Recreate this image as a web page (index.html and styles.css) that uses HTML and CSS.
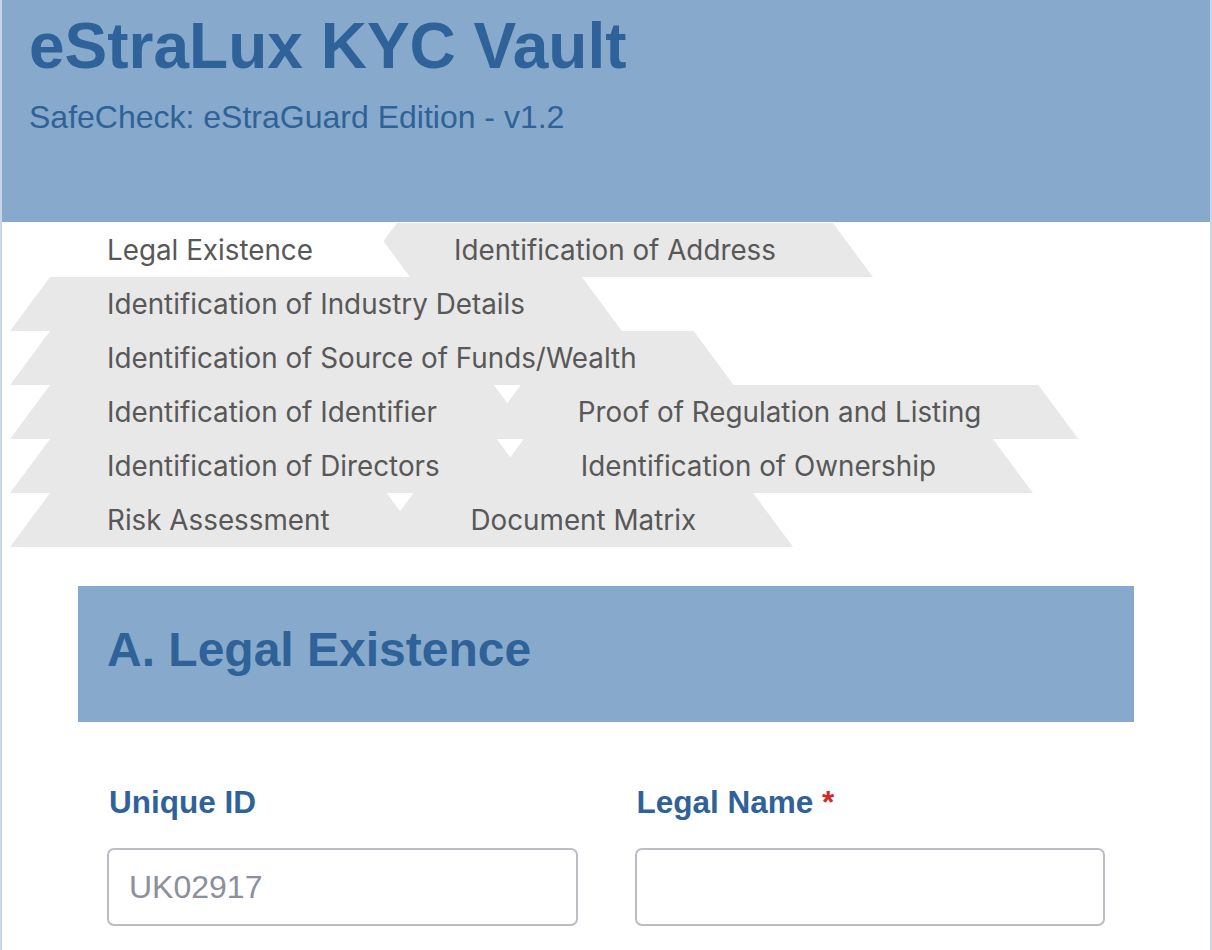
FILE: index.html
```html
<!DOCTYPE html>
<html lang="en">
<head>
<meta charset="utf-8">
<title>eStraLux KYC Vault</title>
<link rel="stylesheet" href="styles.css">
</head>
<body>
<div class="page">
  <header class="masthead">
    <h1 class="title">eStraLux KYC Vault</h1>
    <p class="subtitle">SafeCheck: eStraGuard Edition - v1.2</p>
  </header>
  <nav class="tabs">
    <a class="tab active">Legal Existence</a>
    <a class="tab">Identification of Address</a>
    <a class="tab">Identification of Industry Details</a>
    <a class="tab">Identification of Source of Funds/Wealth</a>
    <a class="tab">Identification of Identifier</a>
    <a class="tab">Proof of Regulation and Listing</a>
    <a class="tab">Identification of Directors</a>
    <a class="tab">Identification of Ownership</a>
    <a class="tab">Risk Assessment</a>
    <a class="tab">Document Matrix</a>
  </nav>
  <section class="section">
    <div class="section-head">
      <h2 class="section-title">A. Legal Existence</h2>
    </div>
    <div class="fields">
      <div class="field">
        <label class="field-label" for="uid">Unique ID</label>
        <input class="field-input" id="uid" type="text" placeholder="UK02917">
      </div>
      <div class="field">
        <label class="field-label" for="lname">Legal Name <span class="req">*</span></label>
        <input class="field-input" id="lname" type="text">
      </div>
    </div>
  </section>
</div>
</body>
</html>
```

FILE: styles.css
```css
html, body {
  margin: 0;
  padding: 0;
  background: #ffffff;
}

.page {
  border-left: 2px solid #c9d6ea;
  border-right: 2px solid #c9d6ea;
  min-height: 950px;
  box-sizing: border-box;
}

.masthead {
  background: #87aacc;
  padding: 9px 27px 86px;
  font-family: "Liberation Sans", Arial, sans-serif;
  color: #2e6298;
}

.title {
  margin: 0;
  font-size: 64px;
  font-weight: 700;
  line-height: normal;
}

.subtitle {
  margin: 16px 0 0;
  font-size: 32px;
  font-weight: 400;
  line-height: normal;
}

.tabs {
  display: flex;
  flex-wrap: wrap;
  padding: 1px 8px 0;
  width: 1090px;
  box-sizing: border-box;
}

.tab {
  display: flex;
  align-items: center;
  height: 54px;
  padding: 0 97px;
  margin-right: -53px;
  background: #e8e8e8;
  clip-path: polygon(40px 0, calc(100% - 40px) 0, 100% 100%, 0 100%);
  font-family: Inter, "Noto Sans", sans-serif;
  font-size: 27.8px;
  color: #585858;
  white-space: nowrap;
  cursor: pointer;
}

.tab.active {
  background: #ffffff;
  position: relative;
  z-index: 1;
}

.section {
  margin: 39px 76px 0;
  font-family: "Liberation Sans", Arial, sans-serif;
}

.section-head {
  background: #87aacc;
  padding: 36px 29px 45px;
}

.section-title {
  margin: 0;
  font-size: 48px;
  font-weight: 700;
  line-height: normal;
  color: #2e6298;
}

.fields {
  display: grid;
  grid-template-columns: 1fr 1fr;
  column-gap: 57px;
  padding: 62px 29px 0;
}

.field {
  display: flex;
  flex-direction: column;
}

.field-label {
  font-size: 31.5px;
  font-weight: 700;
  line-height: normal;
  color: #30629a;
  margin-bottom: 27px;
  padding-left: 2px;
}

.req {
  color: #d22a2a;
}

.field-input {
  height: 78px;
  box-sizing: border-box;
  border: 2px solid #babdc8;
  border-radius: 7px;
  padding: 0 20px;
  font-family: "Liberation Sans", Arial, sans-serif;
  font-size: 32px;
  color: #333;
  background: #fff;
  outline: none;
}

.field-input::placeholder {
  color: #8b909d;
}
```
